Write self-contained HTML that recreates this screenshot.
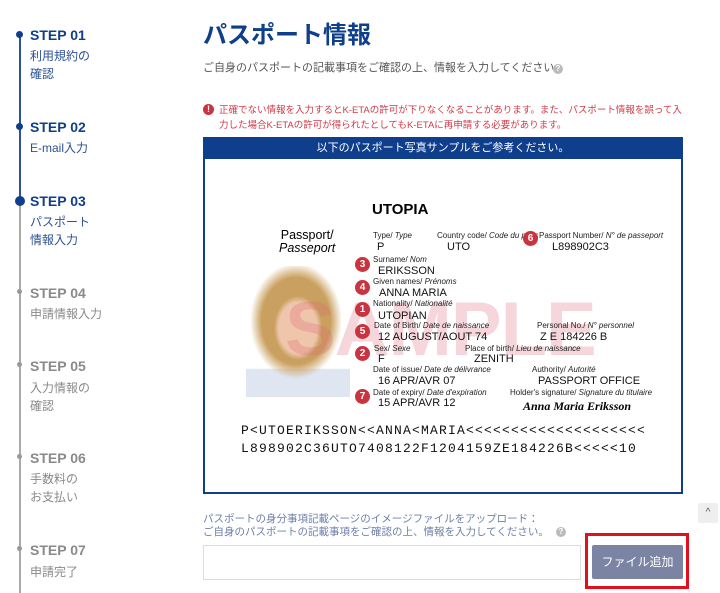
<!DOCTYPE html>
<html><head><meta charset="utf-8"><style>
*{margin:0;padding:0;box-sizing:border-box}
body{width:720px;height:593px;background:#fff;position:relative;overflow:hidden;font-family:"Liberation Sans","Noto Sans CJK JP",sans-serif}
.a{position:absolute;white-space:nowrap;line-height:1}
.st{font-weight:bold;font-size:14px;color:#0f3f8c}
.sd{font-size:12px;color:#2d5196}
.dot{position:absolute;width:7px;height:7px;border-radius:50%;background:#0f3f8c;left:16px}
.gd{background:#999}
.l{font-size:8px;color:#222}
.l i{font-style:italic}
.v{font-size:11px;color:#111}
.b{position:absolute;width:15px;height:15px;border-radius:50%;background:#c8343f;color:#fff;font-size:10px;font-weight:bold;text-align:center;line-height:15px}
</style></head><body>
<div style="position:absolute;left:19px;top:34px;width:1.5px;height:168px;background:#2d5196"></div>
<div style="position:absolute;left:19px;top:202px;width:1.5px;height:391px;background:#aaa"></div>
<div class="dot" style="top:31px"></div>
<div class="dot" style="top:123px"></div>
<div class="dot" style="top:196px;left:15px;width:10px;height:10px"></div>
<div class="dot gd" style="top:289px;left:17px;width:5px;height:5px"></div>
<div class="dot gd" style="top:362px;left:17px;width:5px;height:5px"></div>
<div class="dot gd" style="top:454px;left:17px;width:5px;height:5px"></div>
<div class="dot gd" style="top:546px;left:17px;width:5px;height:5px"></div>
<div class="a st" style="left:30px;top:28px">STEP 01</div>
<div class="a sd" style="left:30px;top:50px">利用規約の</div>
<div class="a sd" style="left:30px;top:68px">確認</div>
<div class="a st" style="left:30px;top:120px">STEP 02</div>
<div class="a sd" style="left:30px;top:142px">E-mail入力</div>
<div class="a st" style="left:30px;top:194px">STEP 03</div>
<div class="a sd" style="left:30px;top:216px">パスポート</div>
<div class="a sd" style="left:30px;top:234px">情報入力</div>
<div class="a st" style="left:30px;top:286px;color:#8a8a8a">STEP 04</div>
<div class="a sd" style="left:30px;top:308px;color:#8a8a8a">申請情報入力</div>
<div class="a st" style="left:30px;top:359px;color:#8a8a8a">STEP 05</div>
<div class="a sd" style="left:30px;top:382px;color:#8a8a8a">入力情報の</div>
<div class="a sd" style="left:30px;top:400px;color:#8a8a8a">確認</div>
<div class="a st" style="left:30px;top:451px;color:#8a8a8a">STEP 06</div>
<div class="a sd" style="left:30px;top:473px;color:#8a8a8a">手数料の</div>
<div class="a sd" style="left:30px;top:491px;color:#8a8a8a">お支払い</div>
<div class="a st" style="left:30px;top:543px;color:#8a8a8a">STEP 07</div>
<div class="a sd" style="left:30px;top:566px;color:#8a8a8a">申請完了</div>

<div class="a" style="left:203px;top:24px;font-size:24px;font-weight:bold;color:#0f3f8c">パスポート情報</div>
<div class="a" style="left:203px;top:63px;font-size:11px;color:#555">ご自身のパスポートの記載事項をご確認の上、情報を入力してください。</div>
<div class="a" style="left:553px;top:64px;width:10px;height:10px;border-radius:50%;background:#bbb;color:#fff;font-size:8px;text-align:center;line-height:10px;font-weight:bold">?</div>
<div class="a" style="left:203px;top:104px;width:11px;height:11px;border-radius:50%;background:#c8343f;color:#fff;font-size:9px;text-align:center;line-height:11px;font-weight:bold">!</div>
<div class="a" style="left:219px;top:103px;font-size:9.5px;color:#d03a48;line-height:15px">正確でない情報を入力するとK-ETAの許可が下りなくなることがあります。また、パスポート情報を誤って入<br>力した場合K-ETAの許可が得られたとしてもK-ETAに再申請する必要があります。</div>

<div style="position:absolute;left:203px;top:137px;width:480px;height:357px;border:2px solid #0f3f8c;border-top:none"></div>
<div class="a" style="left:203px;top:137px;width:480px;height:22px;background:#0f3f8c;color:#fff;font-size:11px;text-align:center;line-height:22px">以下のパスポート写真サンプルをご参考ください。</div>

<div style="position:absolute;left:246px;top:266px;width:104px;height:131px;background:radial-gradient(ellipse 24px 32px at 52px 62px,#efc6ac 80%,transparent 100%),radial-gradient(ellipse 46px 58px at 50px 55px,#caa060 75%,transparent 100%),linear-gradient(#fff 78%,#dfe6f2 79%)"></div>
<div class="a" style="left:285px;top:292px;font-size:76px;font-weight:bold;color:rgba(220,90,110,0.25);letter-spacing:-1px">SAMPLE</div>

<div class="a" style="left:372px;top:202px;font-size:15px;font-weight:bold">UTOPIA</div>
<div class="a" style="left:279px;top:229px;font-size:12.5px;line-height:13px;text-align:center">Passport/<br><i>Passeport</i></div>
<div class="a l" style="left:373px;top:232px">Type/ <i>Type</i></div>
<div class="a v" style="left:377px;top:242px">P</div>
<div class="a l" style="left:437px;top:232px">Country code/ <i>Code du pays</i></div>
<div class="a v" style="left:447px;top:242px">UTO</div>
<div class="b" style="left:523px;top:231px">6</div>
<div class="a l" style="left:539px;top:232px">Passport Number/ <i>N° de passeport</i></div>
<div class="a v" style="left:552px;top:242px">L898902C3</div>
<div class="b" style="left:355px;top:257px">3</div>
<div class="a l" style="left:373px;top:256px">Surname/ <i>Nom</i></div>
<div class="a v" style="left:378px;top:266px">ERIKSSON</div>
<div class="b" style="left:355px;top:280px">4</div>
<div class="a l" style="left:373px;top:278px">Given names/ <i>Prénoms</i></div>
<div class="a v" style="left:379px;top:288px">ANNA MARIA</div>
<div class="b" style="left:355px;top:302px">1</div>
<div class="a l" style="left:373px;top:300px">Nationality/ <i>Nationalité</i></div>
<div class="a v" style="left:378px;top:311px">UTOPIAN</div>
<div class="b" style="left:355px;top:324px">5</div>
<div class="a l" style="left:374px;top:322px">Date of Birth/ <i>Date de naissance</i></div>
<div class="a v" style="left:378px;top:332px">12 AUGUST/AOUT 74</div>
<div class="a l" style="left:537px;top:322px">Personal No./ <i>N° personnel</i></div>
<div class="a v" style="left:540px;top:332px">Z E 184226 B</div>
<div class="b" style="left:355px;top:346px">2</div>
<div class="a l" style="left:374px;top:345px">Sex/ <i>Sexe</i></div>
<div class="a v" style="left:378px;top:354px">F</div>
<div class="a l" style="left:465px;top:345px">Place of birth/ <i>Lieu de naissance</i></div>
<div class="a v" style="left:474px;top:354px">ZENITH</div>
<div class="a l" style="left:373px;top:366px">Date of issue/ <i>Date de délivrance</i></div>
<div class="a v" style="left:378px;top:376px">16 APR/AVR 07</div>
<div class="a l" style="left:532px;top:366px">Authority/ <i>Autorité</i></div>
<div class="a v" style="left:538px;top:376px">PASSPORT OFFICE</div>
<div class="b" style="left:355px;top:389px">7</div>
<div class="a l" style="left:373px;top:389px">Date of expiry/ <i>Date d'expiration</i></div>
<div class="a v" style="left:378px;top:398px">15 APR/AVR 12</div>
<div class="a l" style="left:510px;top:389px">Holder's signature/ <i>Signature du titulaire</i></div>
<div class="a" style="left:523px;top:400px;font-family:'Liberation Serif',serif;font-style:italic;font-weight:bold;font-size:12px">Anna Maria Eriksson</div>
<div class="a" style="left:241px;top:422px;font-family:'Liberation Mono',monospace;font-size:13px;letter-spacing:1.2px;line-height:18px;color:#111">P&lt;UTOERIKSSON&lt;&lt;ANNA&lt;MARIA&lt;&lt;&lt;&lt;&lt;&lt;&lt;&lt;&lt;&lt;&lt;&lt;&lt;&lt;&lt;&lt;&lt;&lt;&lt;&lt;<br>L898902C36UTO7408122F1204159ZE184226B&lt;&lt;&lt;&lt;&lt;10</div>

<div class="a" style="left:203px;top:513px;font-size:10.5px;color:#6d7fa8;line-height:13px">パスポートの身分事項記載ページのイメージファイルをアップロード：<br>ご自身のパスポートの記載事項をご確認の上、情報を入力してください。</div>
<div class="a" style="left:556px;top:527px;width:10px;height:10px;border-radius:50%;background:#bbb;color:#fff;font-size:8px;text-align:center;line-height:10px;font-weight:bold">?</div>
<div style="position:absolute;left:203px;top:545px;width:378px;height:35px;border:1px solid #ddd"></div>
<div style="position:absolute;left:585px;top:533px;width:104px;height:56px;border:3px solid #e0101e"></div>
<div class="a" style="left:592px;top:545px;width:91px;height:34px;background:#7b84a3;color:#fff;font-size:12px;text-align:center;line-height:34px;border-radius:2px">ファイル追加</div>
<div class="a" style="left:698px;top:503px;width:20px;height:20px;background:#eee;border-radius:2px;color:#555;font-size:10px;text-align:center;line-height:20px">^</div>
</body></html>
